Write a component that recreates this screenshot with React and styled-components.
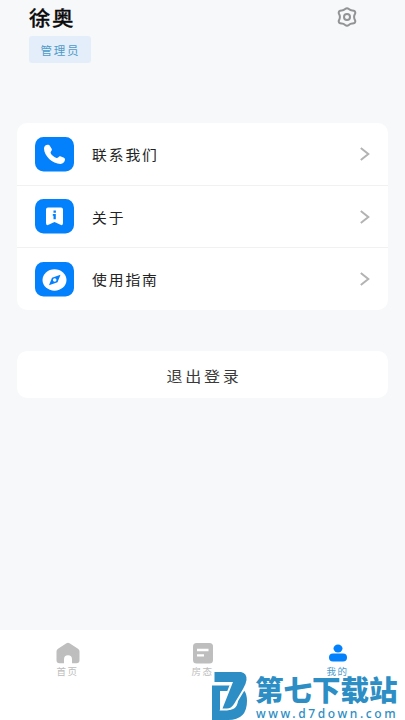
import React from "react";
import styled, { createGlobalStyle } from "styled-components";

const Global = createGlobalStyle`
  * { box-sizing: border-box; }
  body { margin: 0; background: #f6f8fa; font-family: "Noto Sans CJK SC", sans-serif; }
`;
const Screen = styled.div`
  position: relative; width: 405px; height: 720px; overflow: hidden;
  display: flex; flex-direction: column; background: #f6f8fa;
`;
const Header = styled.header`
  height: 123px; padding: 4px 48px 0 29px; display: flex; justify-content: space-between; align-items: flex-start;
`;
const Name = styled.h1`
  margin: 0; font-size: 21.5px; line-height: 28px; font-weight: 500; letter-spacing: 1.5px; color: #0c0c0e;
  transform: scaleY(0.93);
  -webkit-text-stroke: 0.3px currentColor;
`;
const Role = styled.div`
  margin-top: 4px; width: 62px; height: 27px; border-radius: 3px; background: #e4eefa; color: #4f9bc8;
  font-size: 11.5px; line-height: 28px; letter-spacing: 1.7px; padding-left: 11.5px; white-space: nowrap;
`;
const Gear = styled.svg`margin-top: 3px; display: block;`;
const Card = styled.section`
  margin: 0 17px; height: 187px; border-radius: 10px; background: #fff; overflow: hidden;
  display: grid; grid-template-rows: 62px 62px 63px;
`;
const Row = styled.div`
  display: flex; align-items: center; padding: 0 18px 0 18px;
  & + & { border-top: 1px solid #f1f1f3; }
`;
const Tile = styled.svg`width: 39px; height: 35px; flex: none; display: block;`;
const Label = styled.span`
  flex: 1; margin-left: 18px; padding-top: 2px; font-size: 14.8px; letter-spacing: 1.9px; color: #232323; line-height: 22px;
  transform: scaleY(0.92);
`;
const Chevron = styled.svg`width: 10px; height: 14px; display: block;`;
const Logout = styled.button`
  margin: 41px 17px 0; height: 47px; border: 0; padding: 3px 0 0 3px; border-radius: 10px; background: #fff;
  font: 16px/24px "Noto Sans CJK SC", sans-serif; letter-spacing: 2.7px; color: #3a3a3a;
`;
const LogoutText = styled.span`display: block; transform: scaleY(0.9);`;
const Tabs = styled.nav`
  margin-top: auto; height: 90px; background: #fff; display: grid; grid-template-columns: repeat(3, 1fr);
`;
const Tab = styled.div`
  display: flex; flex-direction: column; align-items: center; padding-top: 12px;
  font-size: 9.5px; line-height: 15px; letter-spacing: 1.5px; color: ${(p) => (p.$active ? "#4a9bcc" : "#bcbcbc")};
  svg { display: block; }
`;
const Watermark = styled.div`
  position: absolute; left: 212px; top: 671px; display: flex; color: #2c8ec4;
`;
const Site = styled.div`margin-left: 7px; width: 150px;`;
const SiteName = styled.div`
  font-size: 28.5px; font-weight: 900; line-height: 34px; white-space: nowrap; margin-top: 1px;
`;
const SiteUrl = styled.div`
  font: 500 12px/14px "Noto Sans", sans-serif; letter-spacing: 2.6px; white-space: nowrap; margin: 1px 0 0 1px;
`;

const PhoneIcon = () => (
  <Tile viewBox="0 0 39 35">
    <rect width="39" height="34.5" rx="8.5" fill="#0380fc" />
    <path d="M9 11.5C9 9 11 7.500 13.300 7.800q1 .1 1.500 1l2 3.200c.8 1.500-1.700 2.600-1.200 3.900 1 2.300 3.700 4.300 6 5 1.400.4 2.200-2.200 3.700-1.700l3.700 1.500q1 .5 1 1.500c0 2.300-2 4.700-4.500 4.700C17.500 26.900 9 18.800 9 11.500Z" fill="#fff" />
  </Tile>
);
const AboutIcon = () => (
  <Tile viewBox="0 0 39 35">
    <rect width="39" height="34.5" rx="8.5" fill="#0380fc" />
    <path d="M13 8.500h13q2 0 2 2V24q0 3-2.500 1.800L19.500 23l-6 2.800Q11 27 11 24V10.500q0-2 2-2Z" fill="#fff" />
    <path d="M18.500 11.500h2.400v2.200h-2.400zM17.800 15h3v5.200h-2.300v-3.400h-.7z" fill="#0380fc" />
  </Tile>
);
const GuideIcon = () => (
  <Tile viewBox="0 0 39 35">
    <rect width="39" height="34.5" rx="8.5" fill="#0380fc" />
    <ellipse cx="19.5" cy="18" rx="12" ry="10.7" fill="#fff" />
    <path d="m25.500 12.700-3 7.600-8.500 3 3-7.500Z" fill="#0380fc" />
    <circle cx="19.7" cy="18" r="1.8" fill="#fff" />
  </Tile>
);
const items = [["联系我们", PhoneIcon], ["关于", AboutIcon], ["使用指南", GuideIcon]];

export default function App() {
  return (
    <Screen>
      <Global />
      <Header>
        <div>
          <Name>徐奥</Name>
          <Role>管理员</Role>
        </div>
        <Gear width="20" height="20" viewBox="0 0 20 20" fill="none" stroke="#929395" strokeWidth="2" strokeLinejoin="round">
          <path d="M8.200 2Q10 .5 11.800 2q1.700 1.500 3.600 1.400 2.700.1 2.900 2.100.1 1.200-.7 2.200-1 2.300 0 4.600.8 1 .7 2.200-.2 2-2.900 2.100-1.900-.1-3.600 1.400-1.800 1.500-3.600 0-1.700-1.500-3.600-1.400-2.700-.1-2.900-2.100-.1-1.200.7-2.200 1-2.300 0-4.600-.8-1-.7-2.200.2-2 2.900-2.100 1.900.1 3.600-1.400Z" />
          <circle cx="10" cy="10" r="3" />
        </Gear>
      </Header>
      <Card>
        {items.map(([text, Icon]) => (
          <Row key={text}>
            <Icon />
            <Label>{text}</Label>
            <Chevron viewBox="0 0 10 14" fill="none" stroke="#b3b3b3" strokeWidth="2">
              <path d="m.8 1 7.500 6-7.500 6" />
            </Chevron>
          </Row>
        ))}
      </Card>
      <Logout><LogoutText>退出登录</LogoutText></Logout>
      <Tabs>
        <Tab>
          <svg width="24" height="22" viewBox="0 0 24 22" fill="#bebebe">
            <path d="M10.500 1.300q1.500-1 3 0l8.500 5.500q1.500 1 1.500 2.500v9q0 3-3 3H16v-4a4 4 0 0 0-8 0v4H3.500q-3 0-3-3v-9q0-1.500 1.500-2.500Z" />
          </svg>
          首页
        </Tab>
        <Tab>
          <svg width="22" height="22" viewBox="0 0 22 22">
            <rect x="1" y="1" width="20" height="20.5" rx="3.5" fill="#bebebe" />
            <path d="M5 8h11.500M5 13.300h7" stroke="#fff" strokeWidth="2.3" />
          </svg>
          房态
        </Tab>
        <Tab $active>
          <svg width="20" height="22" viewBox="0 0 20 22" fill="#0380fc">
            <ellipse cx="10" cy="6.500" rx="4.5" ry="4" />
            <rect x="1" y="11.5" width="18" height="8" rx="4" />
          </svg>
          我的
        </Tab>
      </Tabs>
      <Watermark>
        <svg width="36" height="49" viewBox="0 0 36 49" fill="currentColor">
          <path fillRule="evenodd" d="M0 14.500H24Q35 17 35 30 35 49 16 49H0ZM8 20V39H16Q26 39 26 28V20Z" />
          <path
            d="M2.500 1H29Q35 2 34.500 9 34 13 31 18L22 33Q19 37.500 15 37.500H10.500L21 11H2.500Z"
            stroke="#fff" strokeWidth="4" paintOrder="stroke"
          />
        </svg>
        <Site>
          <SiteName>第七下载站</SiteName>
          <SiteUrl>www.d7down.com</SiteUrl>
        </Site>
      </Watermark>
    </Screen>
  );
}
